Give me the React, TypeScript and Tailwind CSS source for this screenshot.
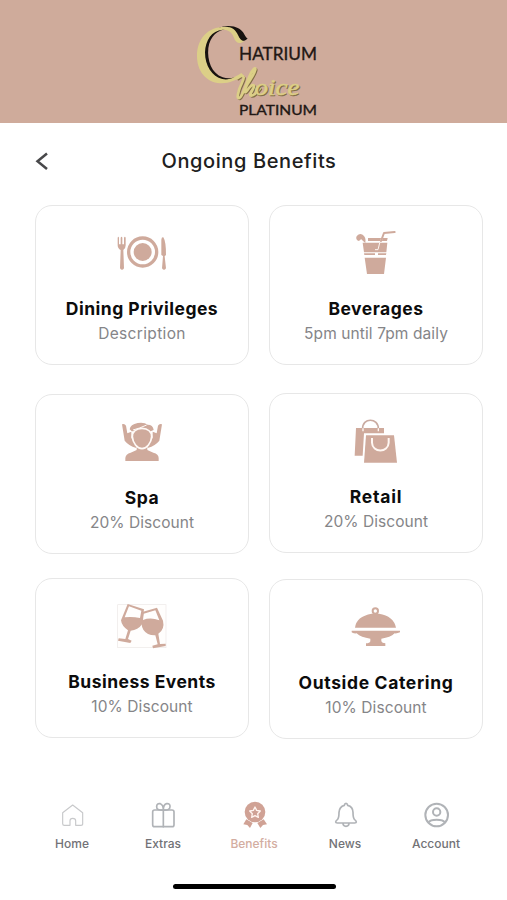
import type { ReactNode } from "react";

const ROSE = "#cfaa9c";

function Logo() {
  return (
    <svg className="h-[123px] w-full" viewBox="0 0 507 123" role="img" aria-label="Chatrium Choice Platinum">
      <g transform="translate(180 15) scale(.33333)">
        <path
          d="M203 70C192 66 193 34 146 33C101 33 69 72 69 116C69 164 99 198 142 195C158 194 170 189 181 181C163 190 144 193 128 187C95 175 81 137 85 99C90 61 118 41 145 43C170 45 172 68 184 77C190 80 197 77 203 70Z"
          fill="#17120f"
        />
        <path
          d="M192 78C179 91 166 82 162 68C156 51 144 43 128 44C95 46 76 76 75 112C75 152 96 185 127 192C149 197 167 185 184 174L190 181C167 196 148 206 121 205C77 202 51 167 51 123C51 71 83 36 134 35C158 35 167 45 174 60C179 71 183 77 192 78Z"
          fill="#dccf87"
        />
        <g fill="none" strokeLinecap="round" strokeLinejoin="round">
          <path d="M172 190C181 182 188 180 191 187C193 194 180 211 176 229C172 244 172 251 178 249C187 246 194 218 207 187C217 162 228 154 226 164C221 184 205 200 198 216C191 232 195 235 201 227C210 214 219 206 222 212C225 218 203 242 214 242C224 242 232 231 240 220" stroke="#806d45" strokeWidth="7" transform="translate(3 3)" />
          <path d="M172 190C181 182 188 180 191 187C193 194 180 211 176 229C172 244 172 251 178 249C187 246 194 218 207 187C217 162 228 154 226 164C221 184 205 200 198 216C191 232 195 235 201 227C210 214 219 206 222 212C225 218 203 242 214 242C224 242 232 231 240 220" stroke="#dccf87" strokeWidth="8" />
        </g>
      </g>
      <g fontFamily="Lato, sans-serif" fill="#211714" stroke="#211714" strokeWidth=".35">
        <text x="239" y="60" fontSize="17.5" textLength="78" lengthAdjust="spacingAndGlyphs">HATRIUM</text>
        <text x="239" y="114.5" fontSize="13.5" textLength="78" lengthAdjust="spacingAndGlyphs">PLATINUM</text>
      </g>
      <g fontFamily="'Liberation Serif', serif" fontSize="23" fontStyle="italic" strokeWidth=".5">
        <text x="255.5" y="95.5" textLength="45" lengthAdjust="spacingAndGlyphs" fill="#806d45" stroke="#806d45">oice</text>
        <text x="254.5" y="94.5" textLength="45" lengthAdjust="spacingAndGlyphs" fill="#dccf87" stroke="#dccf87">oice</text>
      </g>
    </svg>
  );
}

function Pictogram({ box, children }: { box: string; children: ReactNode }) {
  return (
    <svg className="h-[52px] w-14 shrink-0" viewBox={box} fill={ROSE} aria-hidden="true">
      {children}
    </svg>
  );
}

const dining = (
  <Pictogram box="42 15 168 156">
    <circle cx="128" cy="96" r="42" fill="none" stroke={ROSE} strokeWidth="10" />
    <circle cx="128" cy="96" r="27" />
    <path d="M53 53Q55 48 57 53V73H62V53Q65 48 67 53V73H72V53Q75 48 77 53V76Q77 86 70 90L72 145Q66 154 60 145L62 90Q53 86 53 76Z" />
    <path d="M184 105V59Q185 50 190 52Q198 64 198 105L194 109L198 145Q192 154 186 145L189 108Z" />
  </Pictogram>
);

const beverages = (
  <Pictogram box="24 15 168 156">
    <path d="M73 78L75 68L66 60Q64 55 57 63Q47 60 49 50Q56 38 68 44Q79 51 76 68Z" />
    <path d="M84 54H123L121 63H84ZM128 54H143L141 63H126ZM68 68H142L139 97H72ZM72 100H105V105H73ZM114 100H139L138 105H114ZM74 113H138L132 162H81Z" />
    <path d="M119 69L114 89H105" fill="none" stroke="#fff7f2" strokeWidth="3" />
    <path d="M123 63L132 39L164 36" fill="none" stroke={ROSE} strokeWidth="6" strokeLinecap="round" strokeLinejoin="round" />
  </Pictogram>
);

const spa = (
  <Pictogram box="27 12 168 156">
    <path d="M61 153V144Q62 132 77 128L95 120V106H127V120L145 128Q161 132 161 144V153Z" />
    <path d="M51 43Q59 40 63 47L67 70L79 65V84L94 104V114Q70 106 59 92ZM171 43Q163 40 159 47L155 70L143 65V84L128 104V114Q152 106 163 92Z" />
    <path d="M74 58Q76 43 98 39Q118 36 128 44Q144 44 146 60L137 64H80Z" />
    <path d="M111 55C93 55 82 66 82 80C83 99 97 115 111 116C125 115 139 99 140 80C140 66 129 55 111 55Z" stroke="#fffaf7" strokeWidth="5" />
    <path d="M84 60Q104 55 125 45" fill="none" stroke="#fffaf7" strokeWidth="3" />
  </Pictogram>
);

const retail = (
  <Pictogram box="24 9 168 156">
    <path d="M48 54H132V70H72L68 137H44Z" />
    <path d="M78 76H162L171 158H72Z" />
    <path d="M68 57C66 22 116 22 115 57" fill="none" stroke="#c9aaa0" strokeWidth="5" />
    <path d="M69 55V64M115 55V64" fill="none" stroke="#fff8f4" strokeWidth="4" />
    <path d="M96 84V98C97 129 145 129 146 98V84" fill="none" stroke="#fff7f2" strokeWidth="6" />
  </Pictogram>
);

const events = (
  <Pictogram box="27 9 168 156">
    <rect x="38" y="29" width="145" height="129" fill="#fffefd" stroke="#ece8e6" strokeWidth="2" />
    <path fillRule="evenodd" d="M68 27L117 43L111 88Q99 106 77 107L69 132L80 137L76 144L39 137L41 130L61 132L69 106Q50 93 48 76ZM72 34L59 67Q81 64 105 69L109 47Z" />
    <path fillRule="evenodd" d="M109 52L156 38L174 77Q180 103 160 116L165 147L182 146V153L144 160L142 152L158 148L151 121Q127 122 115 104Q106 90 109 52ZM116 56L114 75Q137 66 163 76L151 46Z" />
  </Pictogram>
);

const catering = (
  <Pictogram box="24 3 168 156">
    <circle cx="106" cy="39" r="8" fill="none" stroke={ROSE} strokeWidth="6" />
    <path d="M45 89Q49 55 95 47H117Q161 54 168 89ZM35 98H180V103Q171 107 164 106Q151 119 124 122V130Q126 136 136 136V144H78V136Q89 136 91 130V122Q63 119 50 106Q38 107 35 103Z" />
  </Pictogram>
);

type Benefit = { title: string; note: string; icon: ReactNode; titleClass: string; noteClass: string };

function Card({ title, note, icon, titleClass, noteClass }: Benefit) {
  return (
    <article className="flex h-40 w-[214px] flex-col items-center rounded-[17px] border border-[#e7e7e7] bg-white pt-[19px]">
      {icon}
      <h2 className={`mt-5 whitespace-nowrap text-[17.5px] font-bold leading-6 text-[#0c0c0c] ${titleClass}`}>{title}</h2>
      <p className={`mt-[3px] whitespace-nowrap text-[15.5px] leading-5 text-[#858588] ${noteClass}`}>{note}</p>
    </article>
  );
}

function NavItem({ label, box, active, children }: { label: string; box: string; active?: boolean; children: ReactNode }) {
  return (
    <a className={`flex w-[91px] flex-col items-center ${active ? "text-[#d3ada1]" : "text-[#727276]"}`}>
      <svg className="size-7" viewBox={box} fill="none" stroke="#b0b3b7" strokeWidth="5" strokeLinejoin="round" strokeLinecap="round" aria-hidden="true">
        {children}
      </svg>
      <span className="mt-[7px] text-[12px] font-medium leading-4">{label}</span>
    </a>
  );
}

export default function App() {
  return (
    <main className="flex h-[900px] w-[507px] flex-col overflow-hidden bg-white font-['Inter',sans-serif]">
      <header className="h-[123px] bg-[#cfab9b]">
        <Logo />
      </header>
      <div className="grid h-[82px] grid-cols-[49px_400px_58px] pt-[26px]">
        <button className="flex h-6 w-3.5 items-center justify-self-end" aria-label="Back">
          <svg className="h-[18px] w-3.5" viewBox="0 0 14 18" fill="none" stroke="#48484a" strokeWidth="2.5">
            <path d="M12 1.5L2.5 9.3L12 17" />
          </svg>
        </button>
        <h1 className="h-6 whitespace-nowrap text-center text-[20px] font-medium leading-6 tracking-[0.6px] text-[#202020]">Ongoing Benefits</h1>
      </div>
      <div className="flex h-[596px] gap-5 pl-[35px]">
        <div className="flex flex-col">
          <Card title="Dining Privileges" note="Description" icon={dining} titleClass="tracking-[0.48px]" noteClass="tracking-[0.35px]" />
          <div className="mt-[29px]">
            <Card title="Spa" note="20% Discount" icon={spa} titleClass="tracking-[0.6px]" noteClass="tracking-[0.05px]" />
          </div>
          <div className="mt-6">
            <Card title="Business Events" note="10% Discount" icon={events} titleClass="tracking-[0.48px]" noteClass="tracking-[0.1px]" />
          </div>
        </div>
        <div className="flex flex-col">
          <Card title="Beverages" note="5pm until 7pm daily" icon={beverages} titleClass="tracking-[0.5px]" noteClass="tracking-[0.1px]" />
          <div className="mt-7">
            <Card title="Retail" note="20% Discount" icon={retail} titleClass="tracking-[0.8px]" noteClass="tracking-[0.05px]" />
          </div>
          <div className="mt-[26px]">
            <Card title="Outside Catering" note="10% Discount" icon={catering} titleClass="tracking-[0.65px]" noteClass="tracking-[0.1px]" />
          </div>
        </div>
      </div>
      <nav className="flex h-[82px] pl-[26.5px]">
        <NavItem label="Home" box="84 33 84 84">
          <path stroke="#c8c9cb" strokeWidth="3.5" d="M98 68L128 45L158 68V103Q158 106 153 106H137V92Q137 85 128 85Q120 85 120 92V106H103Q98 106 98 101Z" />
        </NavItem>
        <NavItem label="Extras" box="357 33 84 84">
          <rect x="368" y="60" width="64" height="50" rx="6" />
          <path d="M400 60V110M400 60Q379 62 380 50Q380 39 391 41Q400 44 400 60Q400 43 410 41Q421 40 420 50Q420 62 400 60Z" />
        </NavItem>
        <NavItem label="Benefits" box="30 33 84 84" active>
          <g fill="#d0a295" stroke="none">
            <circle cx="75" cy="66" r="31" />
            <path d="M49 88L40 103L52 105L60 114L68 99ZM101 88L111 103L99 105L91 114L82 99Z" />
          </g>
          <path d="M75 51L80 61L91 63L83 71L85 82L75 77L65 82L67 71L59 63L70 61Z" fill="none" stroke="#fff4ef" strokeWidth="4" />
        </NavItem>
        <NavItem label="News" box="303 33 84 84">
          <path d="M317 96Q317 92 323 88Q327 83 327 67Q328 50 343 46Q344 40 348 40Q352 40 353 46Q369 50 369 67Q369 83 373 88Q379 92 379 96Q379 99 374 99H322Q317 99 317 96ZM339 100Q339 109 348 109Q357 109 357 100" />
        </NavItem>
        <NavItem label="Account" box="576 33 84 84">
          <g strokeWidth="6">
            <circle cx="620" cy="75" r="34" />
            <circle cx="620" cy="66" r="11" />
            <path d="M596 97Q600 89 620 89Q640 89 644 97" />
          </g>
        </NavItem>
      </nav>
      <div className="ml-[173px] mt-px h-[5px] w-[163px] rounded-full bg-black" />
    </main>
  );
}
